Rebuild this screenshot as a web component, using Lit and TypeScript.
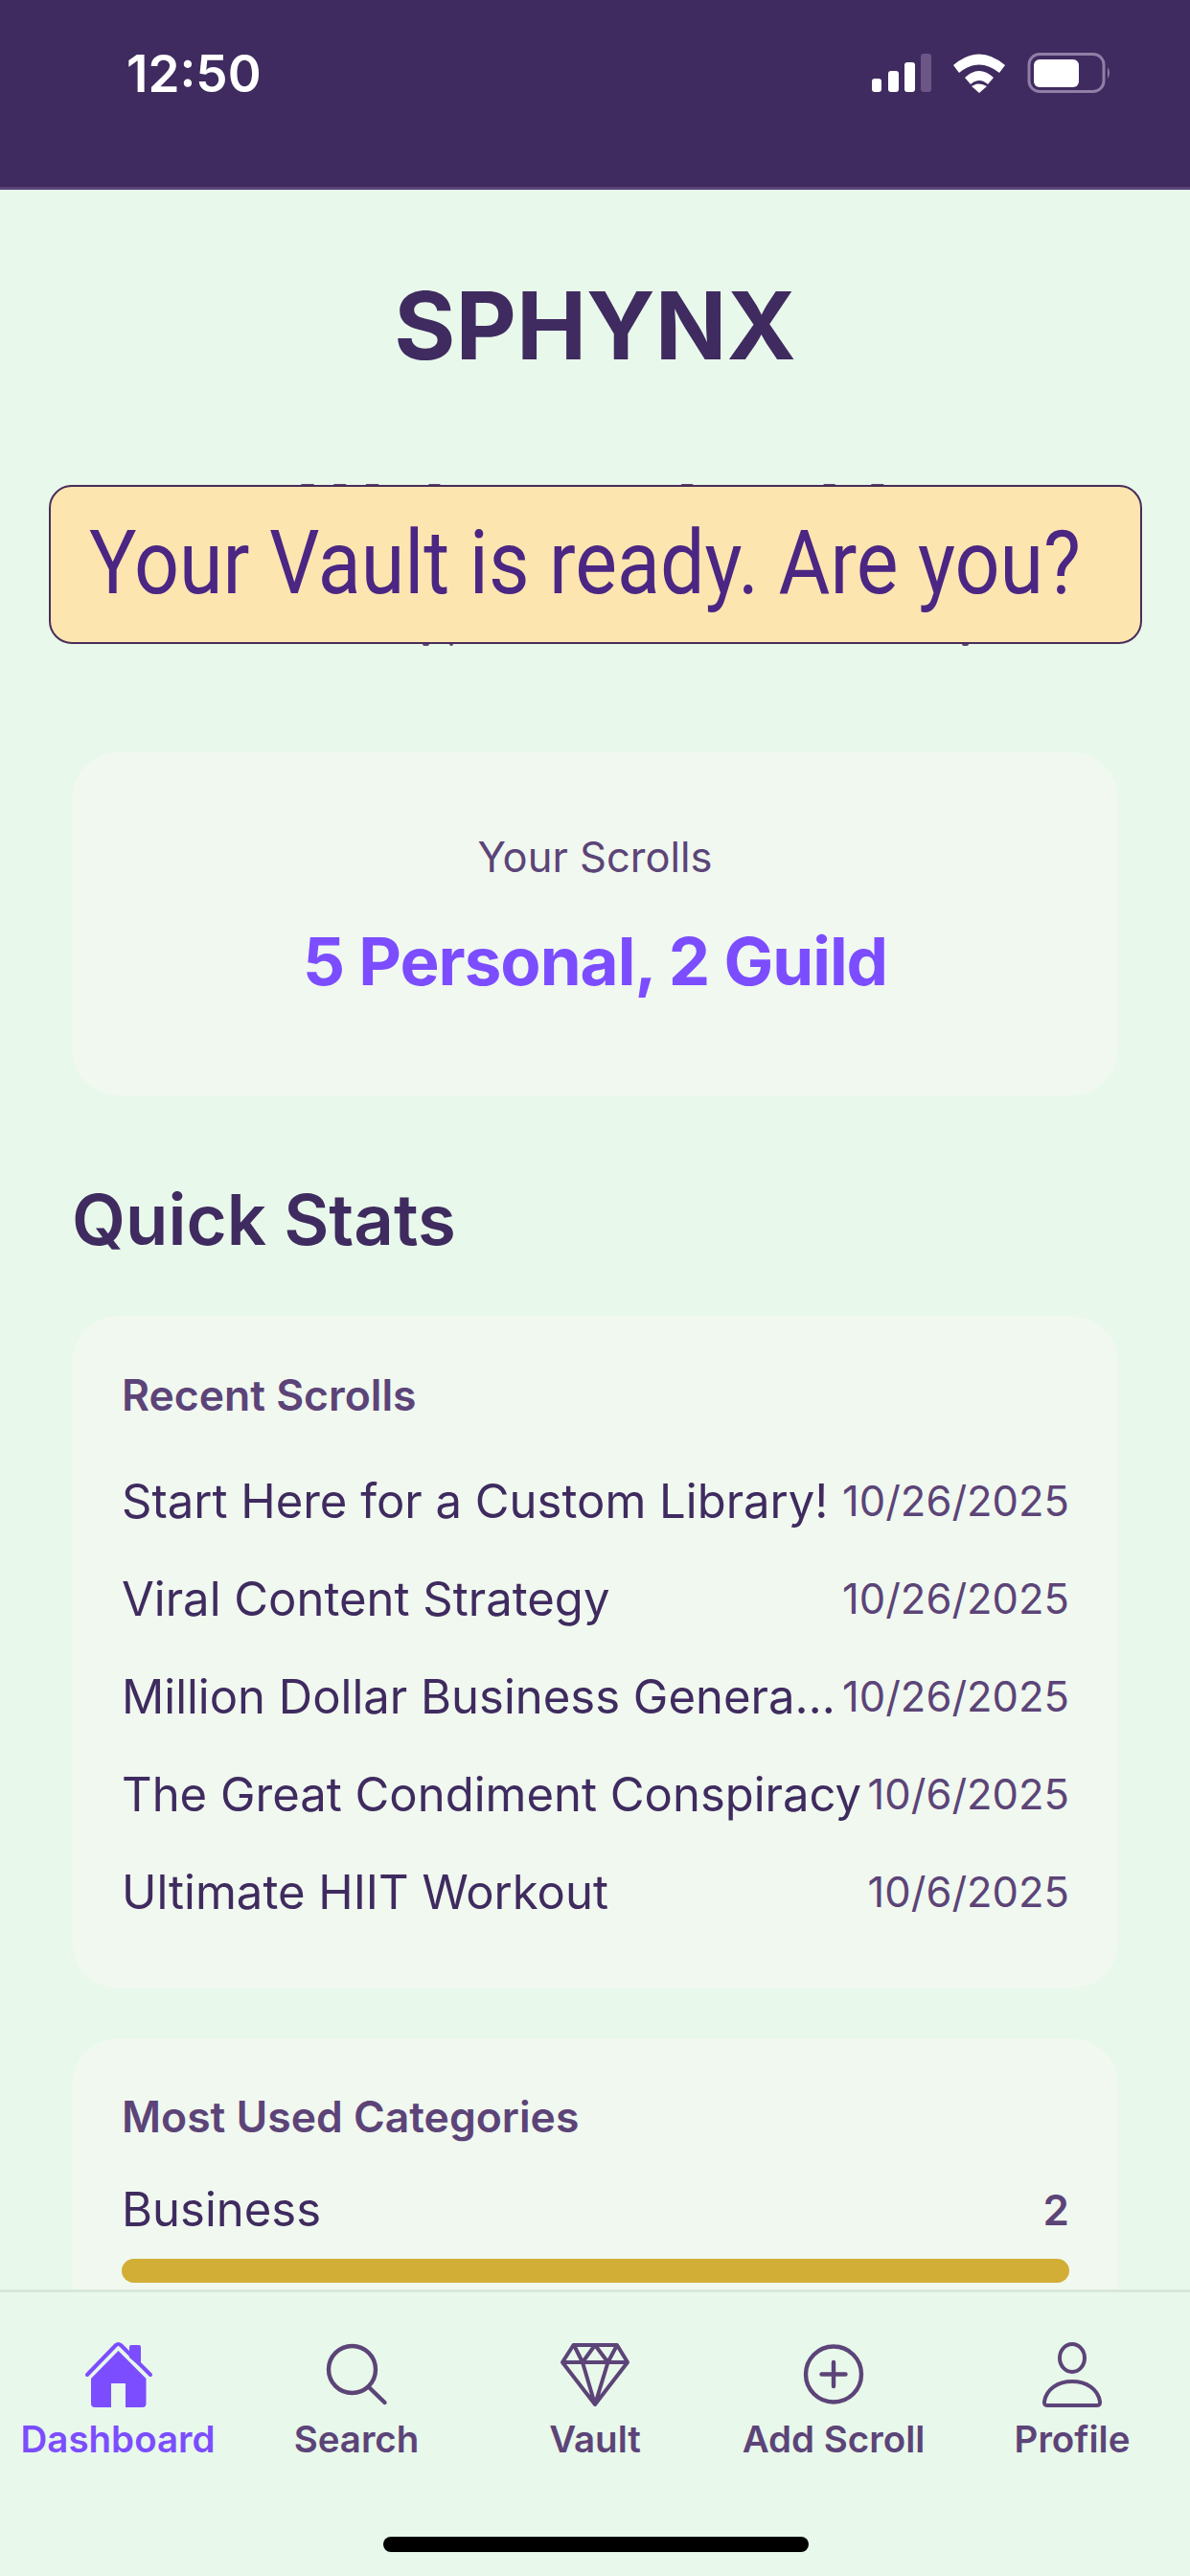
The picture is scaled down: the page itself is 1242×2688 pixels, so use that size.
import { LitElement, html, css, svg } from "lit";
import { customElement } from "lit/decorators.js";

const recent: [string, string][] = [
  ["Start Here for a Custom Library!", "10/26/2025"],
  ["Viral Content Strategy", "10/26/2025"],
  ["Million Dollar Business Genera…", "10/26/2025"],
  ["The Great Condiment Conspiracy", "10/6/2025"],
  ["Ultimate HIIT Workout", "10/6/2025"],
];

const icons = {
  home: svg`<path d="M4 34 L34 3 Q36.5 1 39 3 L70 34" fill="none" stroke="currentColor" stroke-width="4" stroke-linecap="round" stroke-linejoin="round"/><path d="M48 16 V5 Q48 3 50 3 H58 Q60 3 60 5 V26 Z" fill="currentColor"/><path d="M36.5 9 L65.5 38 V64 Q65.5 68 61.5 68 H44 V43 H29 V68 H12 Q8 68 8 64 V38 Z" fill="currentColor"/>`,
  search: svg`<circle cx="31.5" cy="28.5" r="24.5" fill="none" stroke="currentColor" stroke-width="4.4"/><path d="M49 47 L65.5 63" fill="none" stroke="currentColor" stroke-width="4.4" stroke-linecap="round"/>`,
  vault: svg`<path d="M13.5 3 H59 L70 21 L36 65 L2 21 Z M2 21 H70 M14 3 L23 21 L36 3 L49.5 21 L59 3 M23 21 L36 65 L49.5 21" fill="none" stroke="currentColor" stroke-width="4" stroke-linejoin="round" stroke-linecap="round"/>`,
  add: svg`<circle cx="36" cy="33.5" r="29" fill="none" stroke="currentColor" stroke-width="4.4"/><path d="M36 21 V46 M23.5 33.5 H48.5" fill="none" stroke="currentColor" stroke-width="4.4" stroke-linecap="round"/>`,
  profile: svg`<ellipse cx="36" cy="16.5" rx="13" ry="14.5" fill="none" stroke="currentColor" stroke-width="4"/><path d="M7 62 C9 49 21 41 36 41 C51 41 63 49 65 62 Q65.5 66 62 66 H10 Q6.5 66 7 62 Z" fill="none" stroke="currentColor" stroke-width="4" stroke-linejoin="round"/>`,
};

const tabs: [keyof typeof icons, string, boolean][] = [
  ["home", "Dashboard", true],
  ["search", "Search", false],
  ["vault", "Vault", false],
  ["add", "Add Scroll", false],
  ["profile", "Profile", false],
];

@customElement("app-root")
export class AppRoot extends LitElement {
  static styles = css`
    :host { display: block; width: 1242px; height: 2688px; }
    .screen { position: relative; width: 1242px; height: 2688px; overflow: hidden; background: #e8f8ea; font-family: Inter, "Liberation Sans", sans-serif; color: #3f2b5f; display: flex; flex-direction: column; }
    .status { flex: none; height: 198px; box-sizing: border-box; background: #3f2b5f; border-bottom: 3px solid #5c4478; padding: 52px 0 0 132px; display: flex; justify-content: space-between; align-items: flex-start; }
    .time { color: #fff; font-size: 53px; font-weight: 600; line-height: 50px; }
    .sys { margin-right: 82px; margin-top: 4px; display: block; overflow: visible; }
    .main { flex: 1; min-height: 0; overflow: hidden; padding: 0 75px; }
    h1 { margin: 84px 0 0; text-align: center; font-size: 98px; line-height: 116px; font-weight: 700; }
    .welcome { margin: 90px 0 0; text-align: center; font-size: 82px; line-height: 96px; font-weight: 700; color: #5c4478; }
    .under { position: relative; height: 201px; }
    .speck { position: absolute; top: 88px; height: 2px; background: #5c4478; border-radius: 0 0 3px 3px; }
    .s1 { left: 366px; width: 7px; }
    .s2 { left: 394px; width: 4px; }
    .s3 { left: 929px; width: 7px; }
    .card { background: #f0f8ef; border-radius: 48px; box-sizing: border-box; }
    .scrolls { height: 358px; text-align: center; padding-top: 84px; }
    .scrolls .lbl { font-size: 43.5px; line-height: 50px; color: #5c4478; }
    .scrolls .val { margin-top: 44px; font-size: 69px; line-height: 80px; font-weight: 700; color: #7c4dff; letter-spacing: -1px; }
    h2 { margin: 86px 0 0; font-size: 72.5px; line-height: 88px; font-weight: 600; }
    .recent { margin-top: 56px; height: 702px; padding: 58px 51px 0 52px; }
    .ttl { font-size: 44.5px; line-height: 50px; font-weight: 600; color: #5c4478; }
    .rows { margin-top: 34px; display: flex; flex-direction: column; }
    .row { height: 102px; display: flex; justify-content: space-between; align-items: center; font-size: 49px; white-space: nowrap; }
    .row .d { color: #5c4478; font-size: 43.5px; flex: none; }
    .cats { margin-top: 52px; height: 400px; padding: 57px 51px 0 52px; }
    .cat { margin-top: 43px; display: flex; justify-content: space-between; align-items: center; font-size: 49px; line-height: 58px; }
    .cat b { font-size: 44px; font-weight: 600; color: #5c4478; }
    .bar { margin-top: 22px; height: 25px; border-radius: 13px; background: #d3ae36; }
    .banner { position: absolute; left: 51px; top: 506px; width: 1141px; height: 166px; box-sizing: border-box; border: 2px solid #4a2c5a; border-radius: 24px; background: #fde5b0; color: #4b2683; font-family: Roboto, sans-serif; font-size: 93px; line-height: 160px; padding-left: 40px; white-space: nowrap; overflow: hidden; }
    .banner span { display: inline-block; transform: scaleX(0.888); transform-origin: left center; }
    .nav { flex: none; height: 299px; box-sizing: border-box; border-top: 3px solid #d8e8d8; background: #e8f8ea; position: relative; display: grid; grid-template-columns: repeat(5, 249px); justify-content: center; padding-top: 52px; }
    .tab { display: flex; flex-direction: column; align-items: center; color: #5c4478; font-size: 38.5px; font-weight: 600; }
    .tab.on { color: #7c4dff; }
    .tab svg { display: block; width: 72px; height: 72px; overflow: visible; }
    .tab span { margin-top: 6px; line-height: 46px; white-space: nowrap; }
    .indicator { position: absolute; left: 400px; bottom: 25px; width: 444px; height: 16px; border-radius: 8px; background: #000; }
  `;

  render() {
    return html`<div class="screen">
      <div class="status">
        <div class="time">12:50</div>
        <svg class="sys" width="250" height="44" viewBox="0 0 250 44">
          <rect x="0" y="26" width="10" height="14" rx="3" fill="#fff"/>
          <rect x="17" y="18" width="11" height="22" rx="3" fill="#fff"/>
          <rect x="34" y="9" width="11" height="31" rx="3" fill="#fff"/>
          <rect x="51" y="0" width="11" height="40" rx="3" fill="#6b5685"/>
          <path d="M85 12 Q112 -11 139 12 L133 20 Q112 3 91 20 Z M97 25 Q112 11 127 25 L121 32 Q112 24 103 32 Z M112 41 L104 34 Q112 29 120 34 Z" fill="#fff"/>
          <rect x="164" y="0.5" width="78" height="39" rx="11" fill="none" stroke="#8f7fa6" stroke-width="3"/>
          <rect x="169" y="6" width="47" height="29" rx="6" fill="#fff"/>
          <path d="M246 14 Q250 20 246 26 Z" fill="#8f7fa6"/>
        </svg>
      </div>
      <div class="main">
        <h1>SPHYNX</h1>
        <div class="welcome">Welcome back!</div>
        <div class="under"><i class="speck s1"></i><i class="speck s2"></i><i class="speck s3"></i></div>
        <div class="card scrolls">
          <div class="lbl">Your Scrolls</div>
          <div class="val">5 Personal, 2 Guild</div>
        </div>
        <h2>Quick Stats</h2>
        <div class="card recent">
          <div class="ttl">Recent Scrolls</div>
          <div class="rows">
            ${recent.map(([t, d]) => html`<div class="row"><span>${t}</span><span class="d">${d}</span></div>`)}
          </div>
        </div>
        <div class="card cats">
          <div class="ttl">Most Used Categories</div>
          <div class="cat"><span>Business</span><b>2</b></div>
          <div class="bar"></div>
        </div>
      </div>
      <div class="nav">
        ${tabs.map(([i, l, on]) => html`<div class="tab ${on ? "on" : ""}"><svg viewBox="0 0 72 72">${icons[i]}</svg><span>${l}</span></div>`)}
        <div class="indicator"></div>
      </div>
      <div class="banner"><span>Your Vault is ready. Are you?</span></div>
    </div>`;
  }
}
